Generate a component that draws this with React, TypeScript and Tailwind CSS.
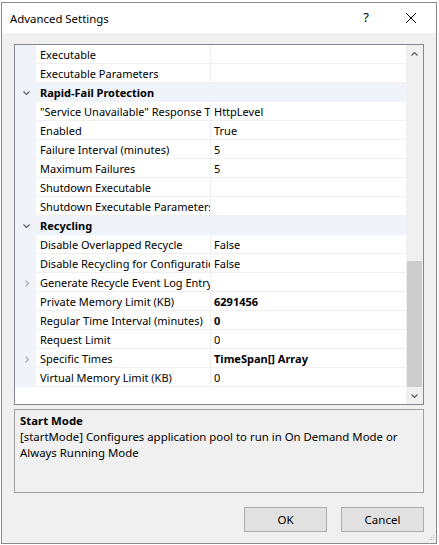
import React from "react";

type Row =
  | { kind: "cat"; name: string }
  | { kind: "prop"; name: string; value?: string; bold?: boolean; expand?: boolean };

const ROWS: Row[] = [
  { kind: "prop", name: "Executable" },
  { kind: "prop", name: "Executable Parameters" },
  { kind: "cat", name: "Rapid-Fail Protection" },
  { kind: "prop", name: "\"Service Unavailable\" Response Type", value: "HttpLevel" },
  { kind: "prop", name: "Enabled", value: "True" },
  { kind: "prop", name: "Failure Interval (minutes)", value: "5" },
  { kind: "prop", name: "Maximum Failures", value: "5" },
  { kind: "prop", name: "Shutdown Executable" },
  { kind: "prop", name: "Shutdown Executable Parameters" },
  { kind: "cat", name: "Recycling" },
  { kind: "prop", name: "Disable Overlapped Recycle", value: "False" },
  { kind: "prop", name: "Disable Recycling for Configuration Changes", value: "False" },
  { kind: "prop", name: "Generate Recycle Event Log Entry", expand: true },
  { kind: "prop", name: "Private Memory Limit (KB)", value: "6291456", bold: true },
  { kind: "prop", name: "Regular Time Interval (minutes)", value: "0", bold: true },
  { kind: "prop", name: "Request Limit", value: "0" },
  { kind: "prop", name: "Specific Times", value: "TimeSpan[] Array", bold: true, expand: true },
  { kind: "prop", name: "Virtual Memory Limit (KB)", value: "0" },
];

function Chevron({ dir, className }: { dir: "down" | "right" | "up"; className?: string }) {
  const pts = dir === "down" ? "0.5,0.5 3.5,3.5 6.5,0.5" : dir === "up" ? "0.5,3.5 3.5,0.5 6.5,3.5" : "0.5,0.5 3.5,3.5 0.5,6.5";
  const vb = dir === "right" ? "0 0 4 7" : "0 0 7 4";
  return (
    <svg viewBox={vb} className={className} fill="none" stroke="currentColor" strokeWidth="1.2">
      <polyline points={pts} />
    </svg>
  );
}

function GridRow({ row }: { row: Row }) {
  if (row.kind === "cat") {
    return (
      <div className="flex h-[19px] bg-[#f0f4fa]">
        <div className="flex w-[21px] items-center justify-center pl-[1px] pt-[1px]">
          <Chevron dir="down" className="h-[4px] w-[7px] text-[#5f5f5f]" />
        </div>
        <div className="flex flex-1 items-center pl-[4px] pt-[2px] font-bold">{row.name}</div>
      </div>
    );
  }
  return (
    <div className="flex h-[19px]">
      <div className="flex w-[21px] items-center justify-center bg-[#f0f4fa] pl-[3px] pt-[1px]">
        {row.expand && <Chevron dir="right" className="h-[7px] w-[4px] text-[#a6a6a6]" />}
      </div>
      <div className="flex w-[175px] items-center overflow-hidden whitespace-nowrap border-b border-r border-[#f0f0f0] pl-[4px] pt-[2px]">
        {row.name}
      </div>
      <div className={`flex flex-1 items-center whitespace-nowrap border-b border-[#f0f0f0] pl-[3px] pt-[2px] ${row.bold ? "font-bold" : ""}`}>
        {row.value}
      </div>
    </div>
  );
}

function Button({ children }: { children: React.ReactNode }) {
  return (
    <button className="flex h-[25px] w-[83px] items-center justify-center border border-[#adadad] bg-[#e1e1e1] pt-[1px] text-[11.5px] text-black">
      {children}
    </button>
  );
}

export default function App() {
  return (
    <div
      className="relative h-[545px] w-[439px] overflow-hidden bg-white text-[11px] text-black"
      style={{ fontFamily: "'Segoe UI', 'Noto Sans', sans-serif" }}
    >
      <div className="ml-[1px] mt-[2px] flex h-[542px] w-[436px] flex-col border border-[#8a8a8a]">
        {/* title bar */}
        <div className="flex h-[30px] items-center bg-white pl-[8px]">
          <span className="flex-1 pt-[2px] text-[11.4px]">Advanced Settings</span>
          <span className="mr-[37px] text-[13px]">?</span>
          <svg viewBox="0 0 10 10" className="mr-[20px] h-[10px] w-[10px]" stroke="#000" strokeWidth="1">
            <line x1="0" y1="0" x2="10" y2="10" />
            <line x1="10" y1="0" x2="0" y2="10" />
          </svg>
        </div>

        {/* body */}
        <div className="relative flex flex-1 flex-col bg-[#f0f0f0] px-[12px] pt-[11px]">
          {/* property grid */}
          <div className="flex h-[361px] w-[410px] border border-[#828790] bg-white">
            <div className="flex flex-1 flex-col">
              {ROWS.map((r, i) => (
                <GridRow key={i} row={r} />
              ))}
            </div>
            <div className="flex w-[17px] flex-col bg-[#f0f0f0]">
              <div className="flex h-[17px] items-center justify-center">
                <Chevron dir="up" className="h-[4px] w-[7px] text-[#606060]" />
              </div>
              <div className="flex flex-1 flex-col px-[1px]">
                <div className="mt-[199px] flex-1 bg-[#cdcdcd]" />
              </div>
              <div className="flex h-[17px] items-center justify-center">
                <Chevron dir="down" className="h-[4px] w-[7px] text-[#606060]" />
              </div>
            </div>
          </div>

          {/* description */}
          <div className="mt-[4px] h-[84px] w-[410px] border border-[#a0a0a0] px-[5px] pt-[3px] text-[11.4px] leading-[16px]">
            <div className="font-bold">Start Mode</div>
            <div>
              [startMode] Configures application pool to run in On Demand Mode or
              <br />
              Always Running Mode
            </div>
          </div>

          {/* buttons */}
          <div className="mt-[14px] flex w-[410px] justify-end gap-[14px]">
            <Button>OK</Button>
            <Button>Cancel</Button>
          </div>

          {/* size grip */}
          <svg viewBox="0 0 7 7" className="absolute bottom-[1px] right-[1px] h-[7px] w-[7px]" fill="#b4b4b4">
            <rect x="5" y="0" width="1" height="1" />
            <rect x="3" y="2" width="1" height="1" />
            <rect x="5" y="2" width="1" height="1" />
            <rect x="1" y="4" width="1" height="1" />
            <rect x="3" y="4" width="1" height="1" />
            <rect x="5" y="4" width="1" height="1" />
          </svg>
        </div>
      </div>
    </div>
  );
}
